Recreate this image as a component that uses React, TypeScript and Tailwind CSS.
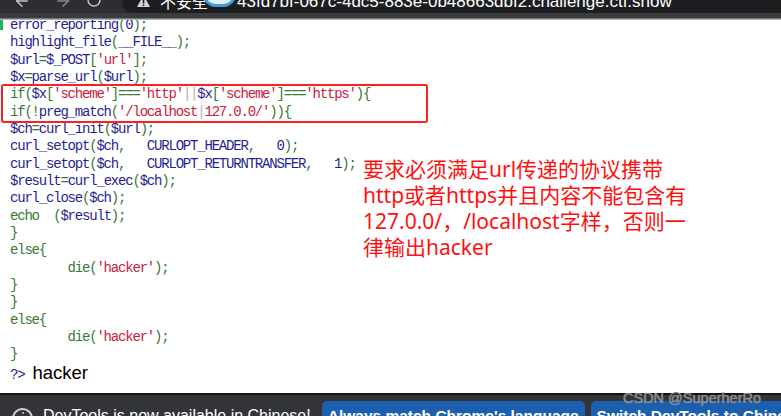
import { ArrowLeft, ArrowRight, RotateCw } from "lucide-react";

type Tone = "b" | "g" | "r" | "p";
type Line = [Tone, string][];

const tone: Record<Tone, string> = {
  b: "text-[#1f1f94]",
  g: "text-[#357a35]",
  r: "text-[#c8203e]",
  p: "text-[#b5b5b5]",
};

const head: Line[] = [
  [["b", "error_reporting"], ["g", "("], ["b", "0"], ["g", ");"]],
  [["b", "highlight_file"], ["g", "("], ["b", "__FILE__"], ["g", ");"]],
  [["b", "$url"], ["g", "="], ["b", "$_POST"], ["g", "["], ["r", "'url'"], ["g", "];"]],
  [["b", "$x"], ["g", "="], ["b", "parse_url"], ["g", "("], ["b", "$url"], ["g", ");"]],
];

const boxed: Line[] = [
  [
    ["g", "if("], ["b", "$x"], ["g", "["], ["r", "'scheme'"], ["g", "]==="], ["r", "'http'"],
    ["p", "||"], ["b", "$x"], ["g", "["], ["r", "'scheme'"], ["g", "]==="], ["r", "'https'"], ["g", "){"],
  ],
  [
    ["g", "if(!"], ["b", "preg_match"], ["g", "("], ["r", "'/localhost"], ["p", "|"],
    ["r", "127.0.0/'"], ["g", ")){"],
  ],
];

const tail: Line[] = [
  [["b", "$ch"], ["g", "="], ["b", "curl_init"], ["g", "("], ["b", "$url"], ["g", ");"]],
  [["b", "curl_setopt"], ["g", "("], ["b", "$ch"], ["g", ",   "], ["b", "CURLOPT_HEADER"], ["g", ",   "], ["b", "0"], ["g", ");"]],
  [["b", "curl_setopt"], ["g", "("], ["b", "$ch"], ["g", ",   "], ["b", "CURLOPT_RETURNTRANSFER"], ["g", ",   "], ["b", "1"], ["g", ");"]],
  [["b", "$result"], ["g", "="], ["b", "curl_exec"], ["g", "("], ["b", "$ch"], ["g", ");"]],
  [["b", "curl_close"], ["g", "("], ["b", "$ch"], ["g", ");"]],
  [["g", "echo  ("], ["b", "$result"], ["g", ");"]],
  [["g", "}"]],
  [["g", "else{"]],
  [["g", "        die("], ["r", "'hacker'"], ["g", ");"]],
  [["g", "}"]],
  [["g", "}"]],
  [["g", "else{"]],
  [["g", "        die("], ["r", "'hacker'"], ["g", ");"]],
  [["g", "}"]],
];

function CodeLine({ line }: { line: Line }) {
  return (
    <div className="h-[17.33px] whitespace-pre">
      {line.map(([t, s], i) => (
        <span key={i} className={tone[t]}>
          {s}
        </span>
      ))}
    </div>
  );
}

function TopBar() {
  return (
    <div className="relative z-10 flex h-[20px] shrink-0 flex-col">
      <div className="flex h-[13px] overflow-hidden bg-[#2d2e31]">
        <div className="flex w-[122px] shrink-0 items-start text-[#c4c7c5]">
          <ArrowLeft size={18} strokeWidth={2} className="-mt-[8px] ml-[13px]" />
          <ArrowRight size={18} strokeWidth={2} className="-mt-[8px] ml-[23px] opacity-60" />
          <RotateCw size={16} strokeWidth={2.2} className="-mt-[8px] ml-[14px]" />
        </div>
        <div className="flex flex-1 items-start rounded-bl-[10px] bg-[#1d1e20] text-white">
          <svg width="13" height="12" viewBox="0 0 13 12" className="-mt-[5px] ml-[15px]">
            <polygon points="6.5,0 13,12 0,12" fill="#d4d5d7" />
            <rect x="5.7" y="4" width="1.6" height="4.5" fill="#1d1e20" />
            <rect x="5.7" y="9.5" width="1.6" height="1.5" fill="#1d1e20" />
          </svg>
          <span className="-mt-[7px] ml-[10px] whitespace-nowrap font-['Noto_Sans_CJK_SC',sans-serif] text-[16px] leading-[17px]">
            不安全
          </span>
          <span className="-mt-[7px] ml-[29px] whitespace-nowrap font-['Liberation_Sans',sans-serif] text-[17px] leading-[17px]">
            43fd7bf-067c-4dc5-883e-0b48663dbf2.challenge.ctf.show
          </span>
        </div>
      </div>
      <div className="h-[5px] bg-[#3b3c3f]" />
      <div className="h-[2px] bg-gradient-to-b from-[#5c5c5c] to-[#cfcfcf]" />
    </div>
  );
}

function InfoBar() {
  return (
    <div className="flex h-[23px] shrink-0 items-start overflow-hidden border-t-2 border-[#151515] bg-[#333437] pl-[12px] font-['Liberation_Sans',sans-serif] text-white">
      <div className="mt-[13px] flex h-[21px] w-[21px] shrink-0 justify-center rounded-full border-2 border-[#d0d1d3]">
        <span className="mt-[2px] h-[2px] w-[2px] rounded-full bg-[#d0d1d3]" />
      </div>
      <span className="ml-[10px] mt-[12px] whitespace-nowrap text-[16px] leading-[18px]">
        DevTools is now available in Chinese!
      </span>
      <div className="ml-[11px] mt-[6px] h-[30px] shrink-0 whitespace-nowrap rounded-[5px] bg-[#1c5fae] px-[6px] pt-[6px] text-[15.5px] font-bold leading-[18px]">
        Always match Chrome's language
      </div>
      <div className="ml-[6px] mt-[6px] h-[30px] shrink-0 whitespace-nowrap rounded-[5px] bg-[#1c5fae] px-[6px] pt-[6px] text-[15.5px] font-bold leading-[18px]">
        Switch DevTools to Chinese
      </div>
    </div>
  );
}

export default function App() {
  return (
    <div className="relative flex h-[416px] w-[781px] flex-col overflow-hidden bg-white">
      <TopBar />

      <div className="-mt-[3px] flex-1 pl-[10px] font-['Liberation_Mono',monospace] text-[14px] leading-[17.33px] tracking-[-1.2px]">
        {head.map((l, i) => (
          <CodeLine key={i} line={l} />
        ))}
        <div className="relative z-20 -my-[2px] -ml-[9px] w-[427px] rounded-[3px] border-2 border-[#ff1f1f] pl-[7px]">
          {boxed.map((l, i) => (
            <CodeLine key={i} line={l} />
          ))}
        </div>
        {tail.map((l, i) => (
          <CodeLine key={i} line={l} />
        ))}
        <div className="flex items-baseline">
          <span className={tone.b}>?&gt;</span>
          <span className="ml-[8px] font-['Liberation_Sans',sans-serif] text-[18.5px] tracking-normal text-black">
            hacker
          </span>
        </div>
      </div>

      <InfoBar />

      {/* annotation drawn over the screenshot */}
      <div className="absolute left-[363px] top-[156px] font-['Noto_Sans','Noto_Sans_CJK_SC',sans-serif] text-[21px] leading-[26px] text-[#ff1010]">
        <div className="whitespace-nowrap">要求必须满足url传递的协议携带</div>
        <div className="whitespace-nowrap">http或者https并且内容不能包含有</div>
        <div className="whitespace-nowrap">127.0.0/，/localhost字样，否则一</div>
        <div className="whitespace-nowrap">律输出hacker</div>
      </div>

      <div className="absolute left-0 top-0 h-[30px] w-[3px] bg-[#22b35e]" />
      <div className="absolute left-[203px] top-[-18px] z-20 h-[25px] w-[33px] rounded-full border-[3px] border-[#3d9ddc] bg-[#e3f1fb]" />

      <div className="absolute left-[623px] top-[390px] font-['Liberation_Sans',sans-serif] text-[14.5px] leading-[16px] text-[#8a8a8a] [text-shadow:0_0_1px_rgba(255,255,255,0.5)]">
        CSDN @SuperherRo
      </div>
    </div>
  );
}
